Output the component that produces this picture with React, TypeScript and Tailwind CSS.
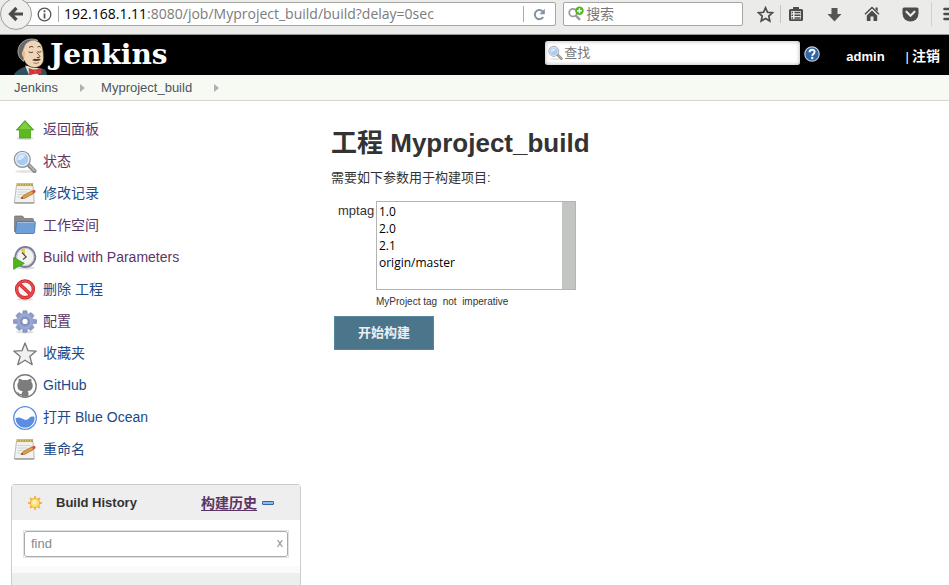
import type { ReactNode } from "react";

const SANS = "font-['Liberation_Sans','Noto_Sans_CJK_SC',sans-serif]";
const CHROME = "font-['Open_Sans','Noto_Sans_CJK_SC',sans-serif]";

function BackIcon() {
  return (
    <svg width="16" height="16" viewBox="0 0 16 16" fill="none" stroke="#4c4c4c" strokeWidth="3.2" aria-hidden="true">
      <path d="M8.500 2 2.500 8l6 6M3 8h12" />
    </svg>
  );
}

function InfoIcon() {
  return (
    <svg width="15" height="15" viewBox="0 0 15 15" fill="none" stroke="#555" aria-hidden="true">
      <circle cx="7.5" cy="7.5" r="6.3" strokeWidth="1.3" />
      <path d="M7.500 6.500v5M7.500 3.300v1.900" strokeWidth="1.8" />
    </svg>
  );
}

function ReloadIcon() {
  return (
    <svg width="13" height="13" viewBox="0 0 13 13" aria-hidden="true">
      <path d="M10.200 9.200A4.600 4.600 0 1 1 9.600 3.200" fill="none" stroke="#8492a0" strokeWidth="2" />
      <path d="M11.800.8v5.400H6.400z" fill="#8492a0" />
    </svg>
  );
}

function SearchPlusIcon() {
  return (
    <svg width="18" height="18" viewBox="0 0 18 17" aria-hidden="true">
      <circle cx="5.6" cy="7" r="4.200" fill="none" stroke="#9a9a9a" strokeWidth="2" />
      <path d="m8.500 10 5 5" stroke="#9a9a9a" strokeWidth="2.600" />
      <circle cx="12.800" cy="4.800" r="4.700" fill="#4fb51c" />
      <path d="M12.800 2v5.600M10 4.800h5.600" stroke="#fff" strokeWidth="1.600" />
    </svg>
  );
}

function StarToolIcon() {
  return (
    <svg width="17" height="17" viewBox="0 0 17 17" aria-hidden="true">
      <path d="m8.500 1.800 2 4.500 5 .5-3.700 3.300 1 4.900-4.300-2.500L4.200 15l1-4.900L1.500 6.800l5-.5z" fill="none" stroke="#4c4c4c" strokeWidth="1.700" />
    </svg>
  );
}

function ClipboardIcon() {
  return (
    <svg width="16" height="16" viewBox="0 0 16 16" aria-hidden="true">
      <path d="M5 3V1.500q0-.5.5-.5h5q.5 0 .5.5V3h2.500q1.500 0 1.500 1.500v9q0 1.500-1.500 1.500h-11Q1 15 1 13.500v-9Q1 3 2.500 3z" fill="#4c4c4c" />
      <path d="M3 5h10v8.200H3z" fill="#ebebe9" />
      <path d="M3.500 6.500H5M6.500 6.500h6M3.500 9.200H5M6.500 9.200h6M3.500 11.900H5M6.500 11.900h6" stroke="#4c4c4c" strokeWidth="1.500" />
    </svg>
  );
}

function DownloadIcon() {
  return (
    <svg width="15" height="15" viewBox="0 0 15 15" aria-hidden="true">
      <path d="M4.500 1h6v6h4l-7 7.500L.5 7h4z" fill="#555" />
    </svg>
  );
}

function HomeIcon() {
  return (
    <svg width="16" height="16" viewBox="0 0 16 16" aria-hidden="true">
      <path d="M1 8.300 8 1.500l7 6.800" fill="none" stroke="#4c4c4c" strokeWidth="1.500" />
      <path d="M11.500 1.500h2.200v4l-2.200-2zM8 4.500l5.200 5V15H9.500v-4.500h-3V15H2.800V9.500z" fill="#4c4c4c" />
    </svg>
  );
}

function PocketIcon() {
  return (
    <svg width="17" height="15" viewBox="0 0 17 15" aria-hidden="true">
      <path d="M2 .5h13q1.500 0 1.500 1.500v4.500a8 8 0 0 1-16 0V2Q.5.5 2 .5z" fill="#4c4c4c" />
      <path d="m4.500 4.700 4 4 4-4" fill="none" stroke="#ebebe9" strokeWidth="2.200" strokeLinecap="round" />
    </svg>
  );
}

function MenuIcon() {
  return (
    <svg width="16" height="14" viewBox="0 0 16 14" aria-hidden="true">
      <path d="M1.500 2h13M1.500 7h13M1.500 12h13" stroke="#4c4c4c" strokeWidth="2.600" strokeLinecap="round" />
    </svg>
  );
}

function JenkinsButler() {
  return (
    <svg width="34" height="37" viewBox="0 0 34 37" aria-hidden="true">
      <path d="M0 37c1-3 4-5 10-8l17 1.500c4 .5 5.500 2 6 6.500z" fill="#335061" />
      <path d="M11 27.500 15 37h9l4-6z" fill="#e8e4da" />
      <path d="M8 8c2.500-4.500 6.500-6 11-5.800 6 .3 9 3.800 9.800 8.800.5 3.500 1.200 7.500.7 11-.5 4-3.500 7-8 7.500-5 .4-9.500-2.500-11.500-7.500C5 20 4 16 8 8z" fill="#f0d6b7" stroke="#3a2e25" strokeWidth=".7" />
      <path d="M9.500 23.500C6 21 3.500 17 4 12.500 4.700 6.500 9 2.500 14.500 1.300c3.500-.7 7-.3 9.500 1.200C17.500 2 12.500 3.800 11 8c-.6 1.800-1 2.800-1.800 4.200 1.300 3 .8 7.500.3 11.300z" fill="#6a6867" stroke="#c9c5c0" strokeWidth=".7" />
      <path d="M8 14c1.200-2 3.200-1 3.200 1s-.5 3.600-1.400 4-2.300-2-1.800-5z" fill="#e6bd94" />
      <path d="M14.500 13.800q2.300 1.700 4.600.2M23.500 13.500q1.800 1.500 3.700 0M15 9.500q2-2 4.300-.5M23.500 9q1.800-1.200 3.200 0M23 14.500c1 2.300 4 3.500 2.300 5h-2.500" fill="none" stroke="#49372a" strokeWidth=".9" />
      <path d="M18 22.300q2.500-2.500 4.500-1 2-1 4.500.3-2.500 2.300-9 .7z" fill="#3d322d" />
      <path d="M19.500 24.800q3 1.500 5.500-.3" fill="none" stroke="#9a4d38" strokeWidth=".8" />
      <path d="M15 30.500 21 32.500l6-2.500 1.200 6.500-6.700-1.500-6 2z" fill="#d33833" stroke="#81261e" strokeWidth=".5" />
      <circle cx="21.300" cy="33.500" r="2" fill="#ef3d3a" stroke="#81261e" strokeWidth=".4" />
    </svg>
  );
}

function Lens({ size }: { size: number }) {
  return (
    <svg width={size} height={size} viewBox="0 0 24 24" aria-hidden="true">
      <ellipse cx="12" cy="21.500" rx="10" ry="1.500" fill="#e4e4e4" />
      <path d="m15.500 15 6 6" stroke="#858585" strokeWidth="4" strokeLinecap="round" />
      <path d="m16.500 15.500 4.800 5" stroke="#b8b8b8" strokeWidth="1.800" strokeLinecap="round" />
      <circle cx="9.300" cy="9.300" r="7.900" fill="#a9cbf0" stroke="#8f959b" strokeWidth="1.400" />
      <circle cx="9.300" cy="9.300" r="6.600" fill="none" stroke="#e9eff6" strokeWidth="1.300" />
      <path d="M4.500 10c0-5 4-6.500 8-5-2 3-3 5-8 5z" fill="#d8e9fb" />
    </svg>
  );
}

function HelpIcon() {
  return (
    <svg width="16" height="16" viewBox="0 0 16 16" aria-hidden="true">
      <circle cx="8" cy="8" r="7.200" fill="#3465a4" stroke="#b9cbe2" strokeWidth="1.200" />
      <path d="M5.500 6.200C5.500 3 10.600 3 10.600 6c0 1.800-2.400 2-2.400 3.800" fill="none" stroke="#fff" strokeWidth="1.900" />
      <circle cx="8.200" cy="12" r="1.200" fill="#fff" />
    </svg>
  );
}

function UpIcon() {
  return (
    <svg width="24" height="24" viewBox="0 0 24 24" aria-hidden="true">
      <ellipse cx="12" cy="20.500" rx="8.500" ry="1.600" fill="#dedede" />
      <path d="m12 2.500 8.700 9.500h-3.200v8h-11v-8H3.300z" fill="#5cba1e" stroke="#4a9e1a" strokeWidth=".8" />
      <path d="m12 4 6 7H6z" fill="#7ccf45" />
    </svg>
  );
}

function NotepadIcon() {
  return (
    <svg width="24" height="24" viewBox="0 0 24 24" aria-hidden="true">
      <path d="M3.500 3.500h16.500l1.300 17q0 .8-1 .8H2.300q-1 0-1-.8z" fill="#f1f1ef" stroke="#b2b2b0" strokeWidth=".9" />
      <path d="M1.500 20.800h19.600" stroke="#9a9a98" strokeWidth="1.200" />
      <path d="M3.500 1.200h16.500v2.800H3.500z" fill="#b8a23c" />
      <path d="M5 1v3.500M7.500 1v3.500M10 1v3.500M12.500 1v3.500M15 1v3.500M17.500 1v3.500" stroke="#e5d68b" strokeWidth=".7" />
      <path d="M4.500 7.500h13M4.500 10h10M4.500 12.500h8M4.500 15h4" stroke="#cfcfcf" strokeWidth=".9" />
      <path d="m8 16.500 2.300-2.900L19 8.800l1.700 2.600-8.900 4.900z" fill="#e2a04a" stroke="#8c5a18" strokeWidth=".6" />
      <path d="m19 8.800 1.800-1q1.800 0 1.900 2.300l-2 1.300z" fill="#d9483c" />
      <path d="m8 16.500 1-1.500 1.200 1.300z" fill="#333" />
    </svg>
  );
}

function FolderIcon() {
  return (
    <svg width="24" height="24" viewBox="0 0 24 24" aria-hidden="true">
      <path d="M1.500 3q0-1 1-1h7l2 2.500h8q1 0 1 1v12h-19z" fill="#8b8b8b" stroke="#777" strokeWidth=".8" />
      <path d="M4.500 7.500h17q.9 0 .8.900l-.8 10.200q-.1.900-1 .9H3.300q-.9 0-.8-.9l1-10.200q.1-.9 1-.9z" fill="#6f9fd6" stroke="#4a7ab3" strokeWidth=".9" />
      <path d="M4.500 8.500h16.800" stroke="#a4c6e8" strokeWidth=".9" />
    </svg>
  );
}

function ClockIcon() {
  return (
    <svg width="24" height="24" viewBox="0 0 24 24" aria-hidden="true">
      <ellipse cx="13" cy="22" rx="9" ry="1.500" fill="#dedede" />
      <circle cx="12.300" cy="11" r="9.900" fill="#f3f3ee" stroke="#7d7f9b" strokeWidth="2" />
      <circle cx="12.300" cy="11" r="8.500" fill="none" stroke="#c9cad6" />
      <path d="M12 9.500 7.500 4q2-1.400 4.500-1.400z" fill="#edcb49" />
      <path d="m9 6.500 4.200 4.500-3.200 2.500" fill="none" stroke="#444" strokeWidth="1.100" />
      <path d="M.6 11.500 11.300 17.300.6 23.300z" fill="#4fb51c" stroke="#3f9a12" strokeWidth=".8" />
    </svg>
  );
}

function ForbiddenIcon() {
  return (
    <svg width="24" height="24" viewBox="0 0 24 24" aria-hidden="true">
      <ellipse cx="12" cy="21.300" rx="8" ry="1.500" fill="#dedede" />
      <circle cx="12" cy="11.300" r="8.400" fill="#f7f4f4" stroke="#c9242a" strokeWidth="3.400" />
      <path d="m6.300 5.800 11.500 11" stroke="#c9242a" strokeWidth="3.400" />
      <circle cx="12" cy="11.300" r="8.400" fill="none" stroke="#e5484b" strokeWidth="2" />
      <path d="m6.300 5.800 11.500 11" stroke="#e5484b" strokeWidth="2" />
    </svg>
  );
}

function GearIcon() {
  return (
    <svg width="24" height="24" viewBox="0 0 24 24" aria-hidden="true">
      <ellipse cx="12" cy="22" rx="9" ry="1.500" fill="#dedede" />
      <g fill="#8e9dc8" stroke="#6f7eab" strokeWidth=".6">
        <path d="m9.500 5 .6-4.200h3.800l.6 4.200zM9.500 17.500l.6 4.700h3.800l.6-4.700zM5.500 9l-5 .7v3.600l5 .7zM18.500 9l5 .7v3.600l-5 .7z" />
        <path d="M5.500 9.500 3 5.500l3-3 4 2.500zM18.500 9.500l2.500-4-3-3L14 5zM5.500 13.500l-2.500 4 3 3 4-2.500zM18.500 13.500l2.500 4-3 3-4-2.500z" />
      </g>
      <circle cx="12" cy="11.500" r="7.800" fill="#98a8d2" />
      <circle cx="12" cy="11.500" r="5" fill="#8292c0" />
      <circle cx="12" cy="11.500" r="3.200" fill="#fff" stroke="#6f7eab" strokeWidth=".8" />
    </svg>
  );
}

function StarIcon() {
  return (
    <svg width="24" height="24" viewBox="0 0 24 24" aria-hidden="true">
      <path d="m12 1 3 7.700 8.200.4-6.400 5.300 2.400 8.300L12 18.200l-7.200 4.500 2.400-8.300L.8 9.100 9 8.700z" fill="#f0f0f0" stroke="#757575" strokeWidth="1.300" strokeLinejoin="round" />
    </svg>
  );
}

function GitHubIcon() {
  return (
    <svg width="24" height="24" viewBox="0 0 24 24" aria-hidden="true">
      <circle cx="12" cy="12" r="11.200" fill="#fff" stroke="#7c7c7c" strokeWidth="1.400" />
      <path
        d="M5.900 4.800c1.600 0 3 .8 3.900 1.500 1.400-.3 3-.3 4.400 0 .9-.7 2.300-1.500 3.900-1.500.5 1.300.5 2.300.2 3.100 1 1.100 1.500 2.300 1.400 4-.2 3.300-2 4.700-5.200 5.200.7.700 1 1.400 1 2.600v3.100H8.600v-1.600c-2.500.3-3.300-.6-3.900-1.900-.3-.6-.7-.9-1.300-1.300 1.500-.4 2.300.6 2.900 1.400.6.700 1.300.8 2.300.5.100-1.100.5-2 1.100-2.700-3.300-.5-5.200-2-5.300-5.300-.1-1.700.4-2.900 1.300-4-.3-.9-.3-1.900.2-3.100z"
        fill="#7c7c7c"
      />
    </svg>
  );
}

function OceanIcon() {
  return (
    <svg width="24" height="24" viewBox="0 0 24 24" aria-hidden="true">
      <circle cx="12" cy="12" r="11.300" fill="#fff" stroke="#5b8ee0" strokeWidth="1.300" />
      <path d="M2.500 12.300c2.500-1.500 5-.8 7.200.5 3 1.800 4.500 1.200 6.500-.7 1.600-1.600 3.500-1.800 5.300-1.200C22.300 16.800 17.500 21.700 12 21.700S2.500 17.300 2.500 12.300z" fill="#5b8ee0" />
    </svg>
  );
}

function SunIcon() {
  return (
    <svg width="16" height="16" viewBox="0 0 16 16" aria-hidden="true">
      <path d="M8 1v14M1 8h14M3 3l10 10M13 3 3 13" stroke="#f6b052" strokeWidth="1.800" />
      <circle cx="8" cy="8" r="4.700" fill="#fde26a" stroke="#f6a93c" />
      <circle cx="7.500" cy="7.300" r="2.400" fill="#fff3b0" />
    </svg>
  );
}

type Task = { label: string; icon: ReactNode; visited?: boolean };

const tasks: Task[] = [
  { label: "返回面板", icon: <UpIcon />, visited: true },
  { label: "状态", icon: <Lens size={24} />, visited: true },
  { label: "修改记录", icon: <NotepadIcon /> },
  { label: "工作空间", icon: <FolderIcon />, visited: true },
  { label: "Build with Parameters", icon: <ClockIcon />, visited: true },
  { label: "删除 工程", icon: <ForbiddenIcon /> },
  { label: "配置", icon: <GearIcon />, visited: true },
  { label: "收藏夹", icon: <StarIcon /> },
  { label: "GitHub", icon: <GitHubIcon /> },
  { label: "打开 Blue Ocean", icon: <OceanIcon /> },
  { label: "重命名", icon: <NotepadIcon /> },
];

function ToolButton({ label, children }: { label: string; children: ReactNode }) {
  return (
    <button type="button" aria-label={label} className="flex h-6 w-[38px] shrink-0 items-center justify-center">
      {children}
    </button>
  );
}

function BrowserBar() {
  return (
    <div className={`relative flex h-[35px] overflow-hidden border-b border-[#959593] bg-[#ebebe9] pt-[2px] text-[14px] ${CHROME}`}>
      <div className="ml-4 flex h-6 min-w-0 flex-1 items-center rounded-r-[2px] border border-[#a5a8a2] bg-white pl-5">
        <InfoIcon />
        <span className="mr-[5px] ml-[6px] h-4 w-px bg-[#aaa]" />
        <span className="min-w-0 flex-1 truncate leading-5 text-[#7b7b7b]">
          <span className="text-black">192.168.1.11</span>:8080/job/Myproject_build/build?delay=0sec
        </span>
        <button type="button" aria-label="Reload" className="flex h-4 w-8 items-center justify-center border-l border-[#aaa]">
          <ReloadIcon />
        </button>
      </div>
      <label className="ml-[7px] flex h-6 w-[180px] items-center gap-[2px] rounded-[2px] border border-[#a5a8a2] bg-white pl-1">
        <SearchPlusIcon />
        <input aria-label="搜索" placeholder="搜索" className="h-5 w-full min-w-0 bg-transparent leading-5 outline-none placeholder:text-[#777]" />
      </label>
      <div className="flex h-6 w-[206px] shrink-0 items-center overflow-hidden">
        <span className="ml-[3px] flex">
          <ToolButton label="Bookmark"><StarToolIcon /></ToolButton>
        </span>
        <span className="-ml-1 h-[18px] w-px shrink-0 bg-[#c4c4c2]" />
        <span className="-ml-1 flex">
          <ToolButton label="Bookmarks list"><ClipboardIcon /></ToolButton>
          <ToolButton label="Downloads"><DownloadIcon /></ToolButton>
          <ToolButton label="Home"><HomeIcon /></ToolButton>
          <ToolButton label="Pocket"><PocketIcon /></ToolButton>
        </span>
        <span className="ml-[2px] h-6 w-px shrink-0 bg-[#d0d0ce]" />
        <ToolButton label="Menu"><MenuIcon /></ToolButton>
      </div>
      <button type="button" aria-label="Back" className="absolute -top-[2px] left-0 flex h-8 w-8 items-center justify-center rounded-full border border-[#9a9d97] bg-[#efefed]">
        <BackIcon />
      </button>
    </div>
  );
}

function Header() {
  return (
    <header className="flex h-10 items-center bg-black text-[13px] font-bold text-white">
      <a href="#" className="flex h-full items-end pl-[14px]">
        <JenkinsButler />
        <span className="ml-[2px] pb-1 font-['DejaVu_Serif',serif] text-[28px] leading-8">Jenkins</span>
      </a>
      <label className="mb-[5px] ml-auto flex h-6 w-[255px] items-center gap-px rounded-[3px] bg-white pl-[3px] shadow-[inset_0_0_4px_#aaa]">
        <Lens size={16} />
        <input aria-label="查找" placeholder="查找" className="h-5 w-full min-w-0 bg-transparent font-normal outline-none placeholder:text-[#777]" />
      </label>
      <a href="#" aria-label="Help" className="mb-[3px] ml-1">
        <HelpIcon />
      </a>
      <a href="#" className="mt-1 ml-[26px] leading-4">admin</a>
      <span className="mt-1 ml-[21px] font-normal leading-4">|</span>
      <a href="#" className="mt-[2px] mr-[9px] ml-[3px] text-[14px] leading-4">注销</a>
    </header>
  );
}

function Crumb({ label }: { label: string }) {
  return (
    <>
      <a href="#">{label}</a>
      <svg width="5" height="8" viewBox="0 0 5 8" className="mr-4 ml-[22px]" aria-hidden="true">
        <path d="M0 0l5 4-5 4z" fill="#b0b0b0" />
      </svg>
    </>
  );
}

function BuildHistory() {
  return (
    <section className="mt-[19px] ml-[11px] flex min-h-[101px] w-[290px] flex-1 flex-col rounded-t-[4px] border border-b-0 border-[#ccc] text-[13px]">
      <div className="flex h-[35px] items-center bg-[#eee] pr-[26px] pl-[15px]">
        <SunIcon />
        <h2 className="ml-[13px] font-bold text-[#333]">Build History</h2>
        <a href="#" className="ml-auto text-[14px] leading-5 font-bold text-[#5c3566] underline underline-offset-2">构建历史</a>
        <button type="button" aria-label="Collapse" className="ml-[5px] h-1 w-3 rounded-[1px] border border-[#3465a4] bg-[#8fb9e6]" />
      </div>
      <div className="flex h-[46px] items-center px-[11px] pt-[2px]">
        <div className="flex h-7 w-full items-center border border-[#e2e2df]">
          <div className="flex h-[26px] w-full items-center rounded-[3px] border border-[#aaa] pr-1 pl-[6px]">
            <input aria-label="find" placeholder="find" className="min-w-0 flex-1 bg-transparent outline-none placeholder:text-[#888]" />
            <button type="button" aria-label="Clear" className="pb-[2px] font-['Open_Sans',sans-serif] text-[12px] leading-4 text-[#888]">x</button>
          </div>
        </div>
      </div>
      <div className="h-[7px] bg-[#fafafa]" />
      <div className="flex-1 bg-[#eee]" />
    </section>
  );
}

export default function App() {
  return (
    <div className={`flex min-h-screen flex-col overflow-hidden bg-white text-[13px] text-[#333] ${SANS}`}>
      <BrowserBar />
      <Header />
      <nav aria-label="Breadcrumb" className="flex h-[26px] items-center border-b border-[#d3d7cf] bg-[#f6faf2] pt-px pl-[14px] text-[#4d545d]">
        <Crumb label="Jenkins" />
        <Crumb label="Myproject_build" />
      </nav>
      <div className="flex flex-1">
        <aside className="flex w-[331px] shrink-0 flex-col pt-3">
          <ul className="pl-[13px] text-[14px]">
            {tasks.map((task) => (
              <li key={task.label} className="h-8">
                <a href="#" className={`flex h-8 items-center gap-[6px] ${task.visited ? "text-[#5c3566]" : "text-[#204a87]"}`}>
                  <span className="mt-[2px] shrink-0">{task.icon}</span>
                  <span className="leading-5">{task.label}</span>
                </a>
              </li>
            ))}
          </ul>
          <BuildHistory />
        </aside>
        <main className="min-w-0 flex-1 pt-[26px]">
          <h1 className="text-[26px] leading-8 font-bold">工程 Myproject_build</h1>
          <p className="mt-[9px] leading-5">需要如下参数用于构建项目:</p>
          <form onSubmit={(event) => event.preventDefault()}>
            <div className="mt-[13px] flex pl-[7px]">
              <label htmlFor="mptag" className="w-[38px] shrink-0 leading-5">mptag</label>
              <div>
                <div className="flex h-[89px] w-[200px] border border-[#b3b5b2]">
                  <select
                    id="mptag"
                    multiple
                    size={5}
                    className="h-full min-w-0 flex-1 overflow-hidden bg-white px-[2px] pt-px font-['Open_Sans',sans-serif] text-[12px] text-black outline-none [&>option]:h-[17px] [&>option]:min-h-0 [&>option]:p-0 [&>option]:leading-[17px]"
                  >
                    <option>1.0</option>
                    <option>2.0</option>
                    <option>2.1</option>
                    <option>origin/master</option>
                  </select>
                  <div className="w-[13px] bg-[#c3c5c3]" />
                </div>
                <p className="mt-1 text-[10px] leading-4 whitespace-pre">MyProject tag  not  imperative</p>
              </div>
            </div>
            <button type="submit" className="mt-[6px] ml-[3px] h-[34px] w-[100px] border border-[#5788a0] bg-[#4b758b] text-[13px] font-bold text-[#eee]">
              开始构建
            </button>
          </form>
        </main>
      </div>
    </div>
  );
}
